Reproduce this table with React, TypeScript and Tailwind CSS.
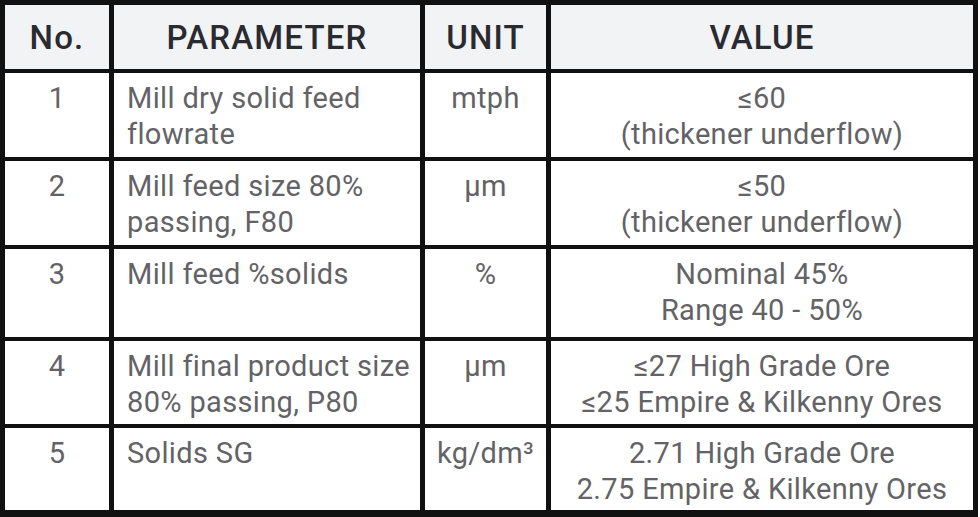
const rows = [
  {
    no: "1",
    param: ["Mill dry solid feed", "flowrate"],
    unit: "mtph",
    value: ["≤60", "(thickener underflow)"],
  },
  {
    no: "2",
    param: ["Mill feed size 80%", "passing, F80"],
    unit: "µm",
    value: ["≤50", "(thickener underflow)"],
  },
  {
    no: "3",
    param: ["Mill feed %solids"],
    unit: "%",
    value: ["Nominal 45%", "Range 40 - 50%"],
  },
  {
    no: "4",
    param: ["Mill final product size", "80% passing, P80"],
    unit: "µm",
    value: ["≤27 High Grade Ore", "≤25 Empire & Kilkenny Ores"],
  },
  {
    no: "5",
    param: ["Solids SG"],
    unit: "kg/dm³",
    value: ["2.71 High Grade Ore", "2.75 Empire & Kilkenny Ores"],
  },
];

export default function App() {
  return (
    <div className="h-[517px] w-[980px] bg-white font-['Roboto',sans-serif]">
      <div className="grid h-[517px] w-[978px] grid-cols-[104px_306px_121px_422px] grid-rows-[64px_84px_84px_88px_83px_82px] gap-x-[5px] gap-y-[4px] bg-[#111] pb-[7px] pl-[5px] pr-[5px] pt-[5px]">
        <HeaderCell>No.</HeaderCell>
        <HeaderCell>PARAMETER</HeaderCell>
        <HeaderCell>UNIT</HeaderCell>
        <HeaderCell>VALUE</HeaderCell>

        {rows.map((row) => (
          <Row key={row.no} row={row} />
        ))}
      </div>
    </div>
  );
}

function HeaderCell({ children }: { children: React.ReactNode }) {
  return (
    <div className="flex items-center justify-center bg-[#f2f3f5] pt-[2px] text-[33px] font-medium tracking-[0.035em] text-[#2a2a31]">
      {children}
    </div>
  );
}

function Row({ row }: { row: (typeof rows)[number] }) {
  const cell =
    "bg-white pt-[7px] text-[29px] leading-[36px] tracking-[0.012em] text-[#636367]";
  return (
    <>
      <div className={`${cell} text-center`}>{row.no}</div>
      <div className={`${cell} pl-[13px]`}>
        {row.param.map((line) => (
          <div key={line}>{line}</div>
        ))}
      </div>
      <div className={`${cell} text-center`}>{row.unit}</div>
      <div className={`${cell} text-center`}>
        {row.value.map((line) => (
          <div key={line}>{line}</div>
        ))}
      </div>
    </>
  );
}
